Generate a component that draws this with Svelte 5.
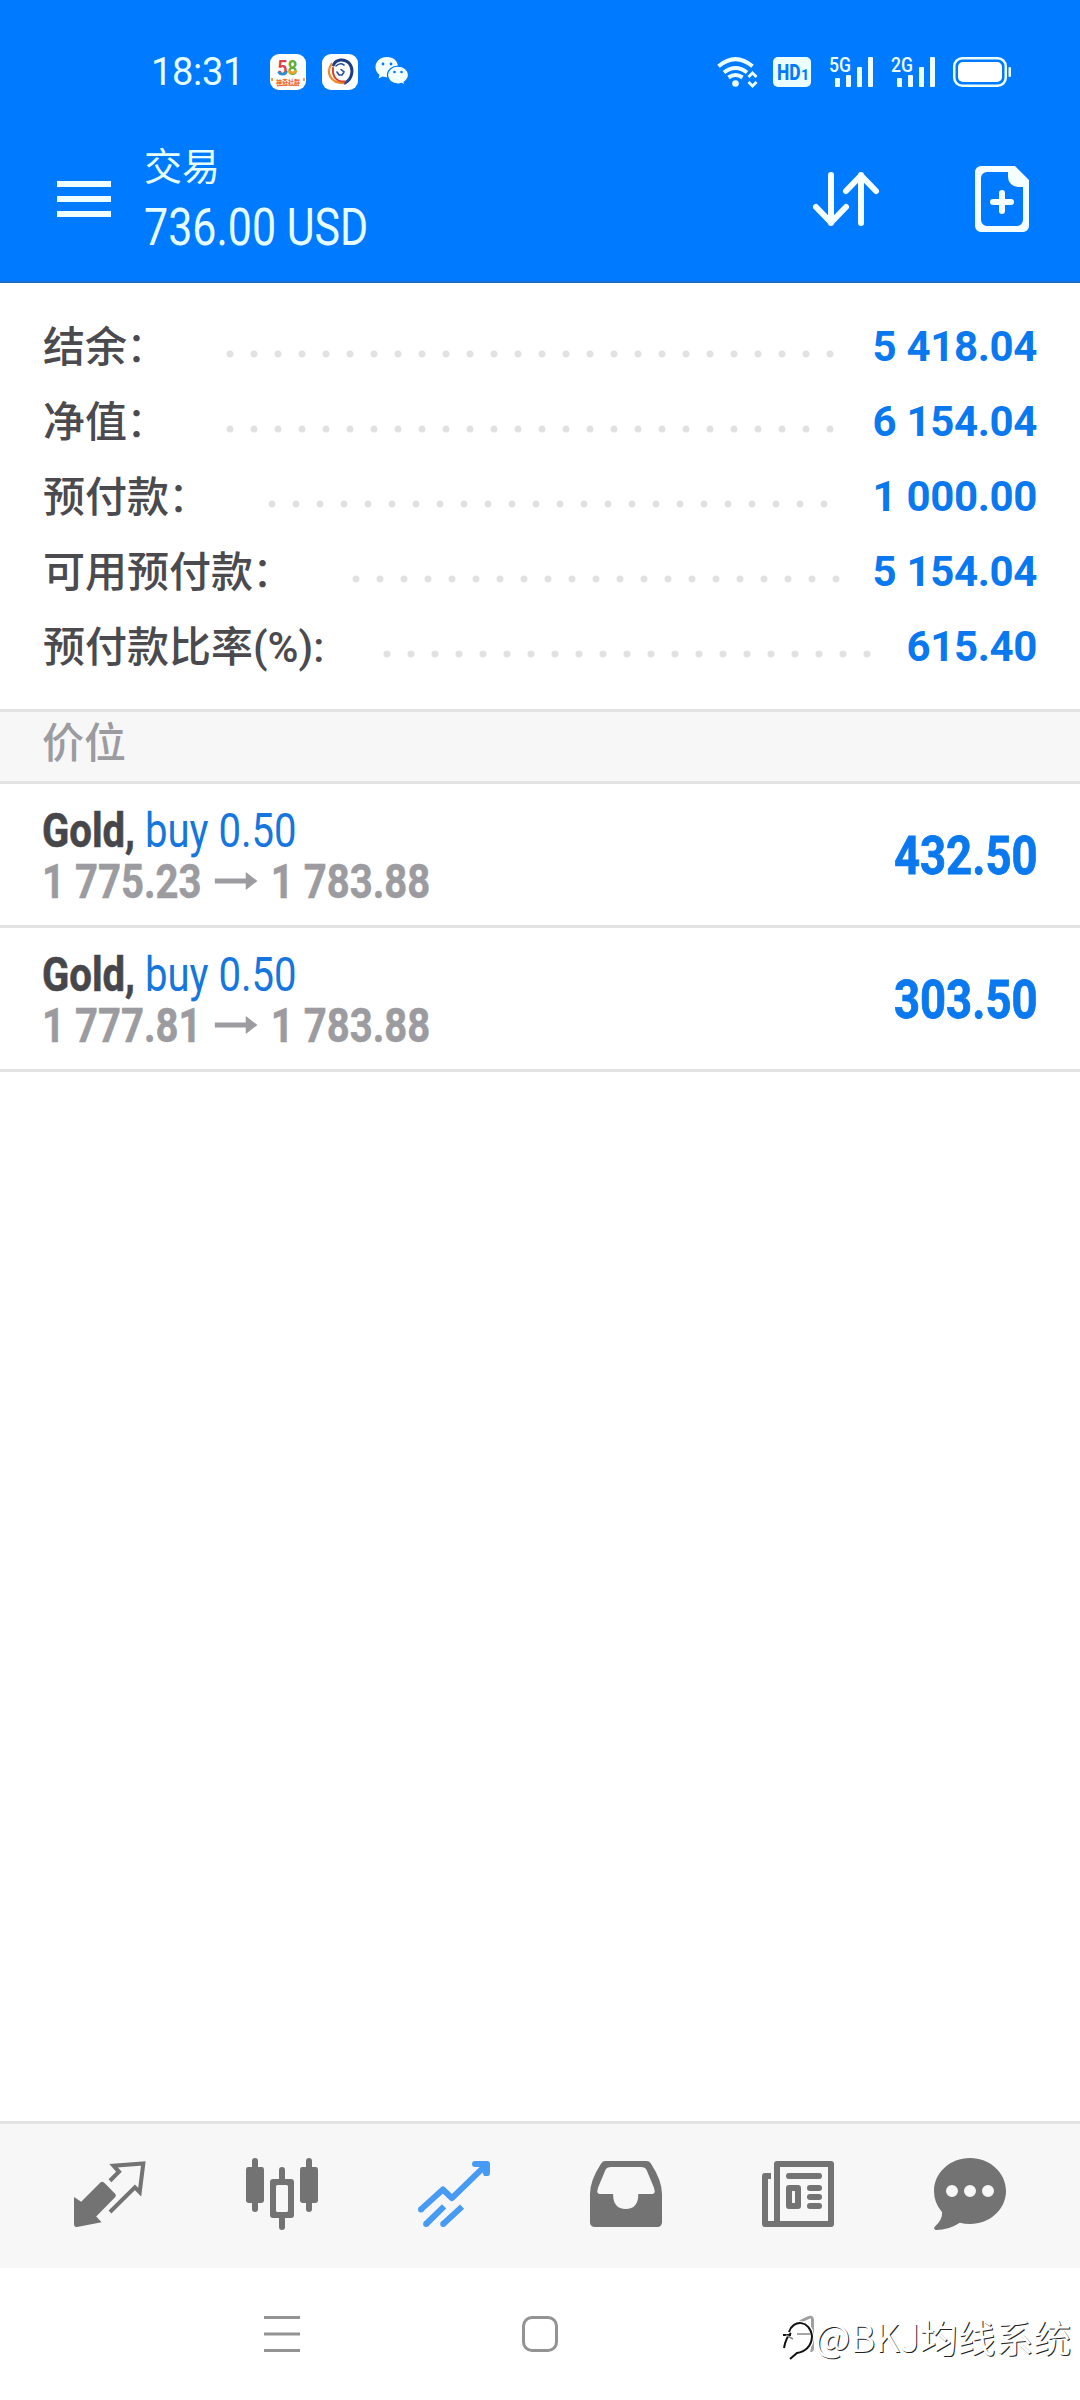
<script>
    const summary = [
        { label: "结余", colon: "：", value: "5 418.04" },
        { label: "净值", colon: "：", value: "6 154.04" },
        { label: "预付款", colon: "：", value: "1 000.00" },
        { label: "可用预付款", colon: "：", value: "5 154.04" },
        { label: "预付款比率(%):", value: "615.40" },
    ];

    const positions = [
        { symbol: "Gold", side: "buy 0.50", open: "1 775.23", current: "1 783.88", profit: "432.50" },
        { symbol: "Gold", side: "buy 0.50", open: "1 777.81", current: "1 783.88", profit: "303.50" },
    ];

    const networks = ["5G", "2G"];
</script>

<div class="screen">
    <header>
        <div class="status">
            <span class="clock">18:31</span>
            <svg class="app58" width="36" height="36" viewBox="0 0 36 36">
                <rect width="36" height="36" rx="9" fill="#fff"/>
                <text x="7.5" y="21" font-size="21" font-weight="700" textLength="20" lengthAdjust="spacingAndGlyphs"><tspan fill="#d8434a">5</tspan><tspan fill="#5fae35">8</tspan></text>
                <path d="M8.500 17.500q1 2.700 4 2.700 3.800 0 4-3.600" fill="none" stroke="#2b8fce" stroke-width="2.600"/>
                <path d="M19 16.500a4 3.700 0 0 0 7.300 0" fill="none" stroke="#f1a423" stroke-width="2.600"/>
                <text x="6" y="30.500" font-size="7" font-weight="700" fill="#f0642d" textLength="24" lengthAdjust="spacingAndGlyphs">神奇社群</text>
                <path d="M7 31.800l11-.8 11 .3" stroke="#f0642d" stroke-width="1" fill="none"/>
                <path d="M1 24h2v3H1zM33 24h2v3h-2z" fill="#f0a03c"/>
            </svg>
            <svg class="swirl" width="36" height="36" viewBox="0 0 36 36">
                <rect width="36" height="36" rx="9" fill="#fff"/>
                <g fill="none" stroke-linecap="round">
                    <path d="M11.500 11C14 5.500 22 4 27 9c5 6 3.500 16-4 20" stroke="#1c3c86" stroke-width="3"/>
                    <path d="M27 25q-3 4-8 4" stroke="#23509c" stroke-width="1.500"/>
                    <path d="M14 12q4-4 8-1M20 21l2-3-3-2.500M20 21h-3l-2-3" stroke="#23509c" stroke-width="1.600"/>
                    <path d="M9.500 10c-6 9-1 19 12 19" stroke="#f08b2c" stroke-width="2.200"/>
                    <path d="M11 14c-1 9 4 14 12 13.500" stroke="#d8452c" stroke-width="2"/>
                </g>
            </svg>
            <svg class="wechat" width="34" height="30" viewBox="0 0 34 30">
                <path d="M12 0C5 0 .5 4.700.5 10c0 3.300 1.500 6 4 8l-.9 3.500 4-2q2 .7 4.400.7C18 20.200 23 16 23 10S18.500 0 12 0z" fill="#f4ffff"/>
                <path d="M23 9.200c-6 0-10.500 3.900-10.500 8.900S17 27 23 27q1.900 0 3.600-.6l3.300 1.900-.8-3c2.600-1.800 4.400-4.300 4.400-7.200 0-5-4.500-8.900-10.500-8.900z" fill="#f4ffff" stroke="#007aff" stroke-width="1.200"/>
                <g fill="#007aff"><circle cx="8" cy="7" r="1.400"/><circle cx="16" cy="7" r="1.400"/><circle cx="19.500" cy="15" r="1.300"/><circle cx="26.500" cy="15" r="1.300"/></g>
            </svg>

            <div class="signals">
                <svg width="42" height="30" viewBox="0 0 42 30">
                    <g fill="none" stroke="#ebffff" stroke-width="4">
                        <path d="M1.500 9.300Q18.500-5 35.500 9.300"/>
                        <path d="M7 15.500q11.500-9 23 0"/>
                        <path d="M11.500 20.500q7-5 14 0"/>
                    </g>
                    <circle cx="18.500" cy="26.500" r="3.300" fill="#ebffff"/>
                    <path d="M31.500 20l4-4 4 4M31.500 25l4 4 4-4" fill="none" stroke="#ebffff" stroke-width="2.800"/>
                </svg>
                <svg class="hd" width="38" height="30" viewBox="0 0 38 30">
                    <rect width="38" height="30" rx="5" fill="#ebffff"/>
                    <text x="4" y="23" font-size="22" font-weight="800" fill="#007aff" textLength="23.500" lengthAdjust="spacingAndGlyphs">HD</text>
                    <text x="28" y="23" font-size="14" font-weight="800" fill="#007aff">1</text>
                </svg>
                {#each networks as net}
                    <svg class="net" width="44" height="30" viewBox="0 0 44 30">
                        <text x="0" y="14.500" font-size="19.500" font-weight="500" fill="#ebffff" textLength="22" lengthAdjust="spacingAndGlyphs">{net}</text>
                        <g fill="#ebffff">
                            <rect x="6" y="21" width="5" height="9" rx="1"/>
                            <rect x="17" y="18" width="5" height="12" rx="1"/>
                            <rect x="28" y="10" width="5" height="20" rx="1"/>
                            <rect x="39" y="0" width="5" height="30" rx="1"/>
                        </g>
                    </svg>
                {/each}
                <svg width="58" height="30" viewBox="0 0 58 30">
                    <rect x="1.250" y="1.250" width="51.500" height="27.500" rx="8" fill="none" stroke="#ebffff" stroke-width="2.500"/>
                    <rect x="5" y="5" width="44" height="20" rx="5" fill="#fff"/>
                    <rect x="55.500" y="10" width="2.500" height="10" rx="1" fill="#ebffff"/>
                </svg>
            </div>
        </div>

        <div class="toolbar">
            <svg class="menu" width="54" height="36" viewBox="0 0 54 36">
                <path d="M0 3h54M0 18h54M0 33h54" stroke="#f0ffff" stroke-width="6"/>
            </svg>
            <div class="heading">
                <div class="title">交易</div>
                <div class="equity">736.00 USD</div>
            </div>
            <svg class="sort" width="66" height="54" viewBox="0 0 66 54">
                <path d="M18 3v48M3 35l15 15.500L33 35M48 51V3M33 19L48 3.500 63 19" fill="none" stroke="#f5ffff" stroke-width="6" stroke-linecap="round" stroke-linejoin="round"/>
            </svg>
            <svg class="add" width="54" height="66" viewBox="0 0 54 66">
                <path fill="#f5ffff" fill-rule="evenodd" d="M6 0h34l14 14v46a6 6 0 0 1-6 6H6a6 6 0 0 1-6-6V6a6 6 0 0 1 6-6zM12 6a6 6 0 0 0-6 6v42a6 6 0 0 0 6 6h30a6 6 0 0 0 6-6V21h-5a10 10 0 0 1-10-10V6z"/>
                <path d="M27 27v18M18 36h18" stroke="#f5ffff" stroke-width="6" stroke-linecap="round"/>
            </svg>
        </div>
    </header>

    <section class="summary">
        {#each summary as row}
            <div class="line">
                <span class="label">{row.label}{#if row.colon}<span class="colon">{row.colon}</span>{/if}</span>
                <span class="dots"></span>
                <span class="value">{row.value}</span>
            </div>
        {/each}
    </section>

    <div class="section-title">价位</div>

    {#each positions as pos}
        <div class="position">
            <div class="info">
                <div class="deal"><b>{pos.symbol},</b> <span>{pos.side}</span></div>
                <div class="prices">
                    {pos.open}
                    <svg width="51" height="18" viewBox="0 0 51 18"><path d="M0 6.500h37V0l14 9-14 9v-6.500H0z" fill="#9b9ba0"/></svg>
                    {pos.current}
                </div>
            </div>
            <div class="profit">{pos.profit}</div>
        </div>
    {/each}

    <nav class="tabs">
        <div>
            <svg viewBox="0 0 24 24">
                <path d="M0 13l2.400 1.600 6.400-6.400q.6-.6 1.200 0l3.700 3.700q.6.600 0 1.200L7.400 19.500l1.800 1.900L1 23q-1 .1-1-1z" fill="#737373"/>
                <path d="M12 18l8.300-8.200 1.600 1.600 1.200-9.600-9.900.8L15 4.600l-3 3" fill="none" stroke="#737373" stroke-width="1.350"/>
            </svg>
        </div>
        <div>
            <svg viewBox="0 0 24 24" fill="#737373">
                <rect x="0" y="3" width="6" height="12" rx=".8"/><rect x="2" y="0" width="2" height="18" rx="1"/>
                <rect x="18" y="3" width="6" height="12" rx=".8"/><rect x="20" y="0" width="2" height="18" rx="1"/>
                <path fill-rule="evenodd" d="M9 7h6a1 1 0 0 1 1 1v11a1 1 0 0 1-1 1H9a1 1 0 0 1-1-1V8a1 1 0 0 1 1-1zM10.500 9a.5.500 0 0 0-.5.500v8a.5.500 0 0 0 .5.500h3a.5.500 0 0 0 .5-.5v-8a.5.500 0 0 0-.5-.5z"/>
                <path d="M11 7.500V4a1 1 0 0 1 2 0v3.500zM11 19.500V23a1 1 0 0 0 2 0v-3.500z"/>
            </svg>
        </div>
        <div>
            <svg viewBox="0 0 24 24" fill="none" stroke="#479bf4" stroke-width="2">
                <path d="M.9 17.200l7.400-6.700 3 2.900L22.800 2.200" stroke-linejoin="round"/>
                <path d="M19 2H23V5" stroke-linecap="round" stroke-linejoin="round"/>
                <path d="M2.700 22l6-5.900M8.400 22l6.300-5.800"/>
                <g fill="#479bf4" stroke="none"><circle cx="1" cy="17.200" r="1"/><circle cx="2.700" cy="22" r="1"/><circle cx="8.400" cy="22" r="1"/><path d="M20.500 2.500L23.500 1.900V6h-1.500z"/></g>
            </svg>
        </div>
        <div>
            <svg viewBox="0 0 24 24">
                <path fill="#737373" fill-rule="evenodd" d="M5.200 1h13.600q1 0 1.500.8Q24 7.500 24 12v9.500a1.500 1.500 0 0 1-1.500 1.500h-21A1.500 1.500 0 0 1 0 21.500V12Q0 7.500 3.700 1.800 4.200 1 5.200 1zM7 3q-1.400 0-1.900 1.100L2.700 9.800 2.400 11.200Q2.400 12 3.200 12h4.500q0 5 4.200 5t4.200-5h4.700q.8 0 .8-.8l-.3-1.400-2.400-5.700Q18.400 3 17 3z"/>
            </svg>
        </div>
        <div>
            <svg viewBox="0 0 24 24" fill="#737373">
                <path fill-rule="evenodd" d="M5 1h18a1 1 0 0 1 1 1v20a1 1 0 0 1-1 1H1a1 1 0 0 1-1-1V6a1 1 0 0 1 1-1h2v2H2v14h2V2a1 1 0 0 1 1-1zM6 3v18h16V3z"/>
                <rect x="8" y="5" width="12" height="2" rx="1"/>
                <path fill-rule="evenodd" d="M9 9h3a1 1 0 0 1 1 1v6a1 1 0 0 1-1 1H9a1 1 0 0 1-1-1v-6a1 1 0 0 1 1-1zM10 11v4h1v-4z"/>
                <rect x="15" y="9" width="5" height="2" rx="1"/><rect x="15" y="12" width="5" height="2" rx="1"/><rect x="15" y="15" width="5" height="2" rx="1"/>
            </svg>
        </div>
        <div>
            <svg viewBox="0 0 24 24">
                <path fill="#737373" fill-rule="evenodd" d="M12 0c6.600 0 12 4.900 12 11s-5.400 11-12 11q-1.800 0-3.400-.4Q5 24 .7 24q-1-.3-.5-1 2.700-2.500 2.500-4.900Q0 15 0 11C0 4.900 5.400 0 12 0zM6 9a2 2 0 1 0 0 4 2 2 0 0 0 0-4zm6 0a2 2 0 1 0 0 4 2 2 0 0 0 0-4zm6 0a2 2 0 1 0 0 4 2 2 0 0 0 0-4z"/>
            </svg>
        </div>
    </nav>

    <footer>
        <div><svg width="36" height="36" viewBox="0 0 36 36"><path d="M0 1.500h36M0 18h36M0 34.500h36" stroke="#939393" stroke-width="3"/></svg></div>
        <div><svg width="36" height="36" viewBox="0 0 36 36"><rect x="1.500" y="1.500" width="33" height="33" rx="8.500" fill="none" stroke="#939393" stroke-width="3"/></svg></div>
        <div><svg width="36" height="36" viewBox="0 0 36 36"><path d="M20 5.500L28 1.800q4.500-2 4.500 2V32q0 3-2 2.500" fill="none" stroke="#a0a0a0" stroke-width="3"/></svg></div>
        <div class="watermark">
            <svg width="34" height="44" viewBox="0 0 34 44">
                <path d="M7 14C12 1 30 2 31 18c.5 11-8 16-15 17l-6 5" fill="none" stroke="#fff" stroke-width="4"/>
                <path d="M8 14C12 1 29 2 31 18c0 11-8 16-15 17l-7 6M2 17l8 0M10 15Q5 19 3 30" fill="none" stroke="#111" stroke-width="2"/>
                <path d="M5 17l7 4M16 16h14" stroke="#888" stroke-width="1.500"/>
            </svg>
            <span>@BKJ均线系统</span>
        </div>
    </footer>
</div>

<style>
    :global(body) {
        margin: 0;
        background: #fff;
    }

    .screen {
        display: flex;
        flex-direction: column;
        width: 1080px;
        height: 2400px;
        overflow: hidden;
        background: #fff;
        font-family: Roboto, "Noto Sans CJK SC", sans-serif;
    }

    svg {
        display: block;
        flex: none;
        overflow: visible;
    }

    header {
        box-sizing: border-box;
        height: 283px;
        background: #007aff;
        border-bottom: 2px solid #1a6dcb;
    }

    .status {
        display: flex;
        align-items: center;
        height: 144px;
        padding: 0 69px 0 151px;
    }
    .clock {
        width: 119px;
        color: #e6ffff;
        font-size: 38px;
        line-height: 44px;
        letter-spacing: -0.3px;
        white-space: nowrap;
    }
    .swirl {
        margin-left: 16px;
    }
    .wechat {
        margin-left: 17px;
    }
    .signals {
        display: flex;
        margin-left: auto;
    }
    .hd {
        margin-left: 14px;
    }
    .net {
        margin-left: 18px;
    }
    .net + svg {
        margin-left: 18px;
    }

    .toolbar {
        display: flex;
        align-items: center;
        height: 110px;
        padding: 0 51px 0 57px;
    }
    .heading {
        flex: 1;
        margin-left: 33px;
        padding-top: 6px;
        color: #e6ffff;
    }
    .title {
        font-size: 38px;
        line-height: 50px;
    }
    .equity {
        font-size: 51.5px;
        font-weight: 450;
        line-height: 71px;
        transform: scaleX(0.834);
        transform-origin: left;
        white-space: nowrap;
    }
    .add {
        margin-left: 96px;
    }

    .summary {
        padding: 26px 43px 0;
        height: 400px;
    }
    .line {
        display: flex;
        align-items: center;
        height: 75px;
        font-size: 42px;
        white-space: nowrap;
    }
    .label {
        padding-bottom: 6px;
        color: #4a4a4f;
        font-weight: 500;
    }
    .colon {
        margin: 0 1px 0 -1px;
        font-weight: 400;
    }
    .dots {
        flex: 1;
        height: 8px;
        margin: 14px 31px 0 49px;
        background: radial-gradient(circle at center, #e1e1e1 3px, transparent 4px) 0 0 / 24px 8px repeat-x;
    }
    .line:last-child .dots {
        margin-left: 51px;
    }
    .value {
        color: #0a78ee;
        font-weight: 700;
        letter-spacing: -0.35px;
    }

    .section-title {
        box-sizing: border-box;
        height: 75px;
        padding-left: 42px;
        border: solid #e3e3e3;
        border-width: 3px 0;
        background: #f7f7f7;
        color: #9b9ba0;
        font-size: 42px;
        font-weight: 500;
        line-height: 64px;
    }

    .position {
        box-sizing: border-box;
        display: flex;
        justify-content: space-between;
        align-items: center;
        height: 144px;
        padding: 0 42px;
        border-bottom: 3px solid #e3e3e3;
        white-space: nowrap;
    }
    .info {
        padding-top: 2px;
        font-size: 48px;
        line-height: 51px;
        transform: scaleX(0.835);
        transform-origin: left;
    }
    .deal {
        color: #1576dd;
        font-weight: 450;
    }
    .deal b {
        color: #47474b;
        -webkit-text-stroke: 0.6px #47474b;
    }
    .prices {
        color: #9b9ba0;
        font-weight: 700;
        -webkit-text-stroke: 0.5px #9b9ba0;
    }
    .prices svg {
        display: inline-block;
        margin: 0 4px 8px;
    }
    .profit {
        color: #0a78ee;
        font-size: 54px;
        font-weight: 700;
        -webkit-text-stroke: 0.8px #0a78ee;
        transform: scaleX(0.842);
        transform-origin: right;
        padding-top: 2px;
    }

    .tabs {
        box-sizing: border-box;
        display: flex;
        height: 147px;
        margin-top: auto;
        padding: 34px 24px 0;
        border-top: 3px solid #e3e3e3;
        background: #f7f7f7;
    }
    .tabs div {
        width: 172px;
    }
    .tabs svg {
        width: 72px;
        height: 72px;
        margin: 0 auto;
    }

    footer {
        position: relative;
        display: flex;
        align-items: center;
        height: 132px;
        padding: 0 153px;
    }
    footer > div:not(.watermark) {
        display: flex;
        justify-content: center;
        width: 258px;
    }
    .watermark {
        position: absolute;
        right: 9px;
        bottom: 38px;
        display: flex;
        align-items: center;
        color: #fff;
        font-family: "Noto Sans CJK SC", sans-serif;
        font-size: 37.8px;
        line-height: 50px;
        white-space: nowrap;
        text-shadow: 1px 1px 0.5px #222;
    }
    .watermark span {
        margin-top: -8px;
    }
</style>
